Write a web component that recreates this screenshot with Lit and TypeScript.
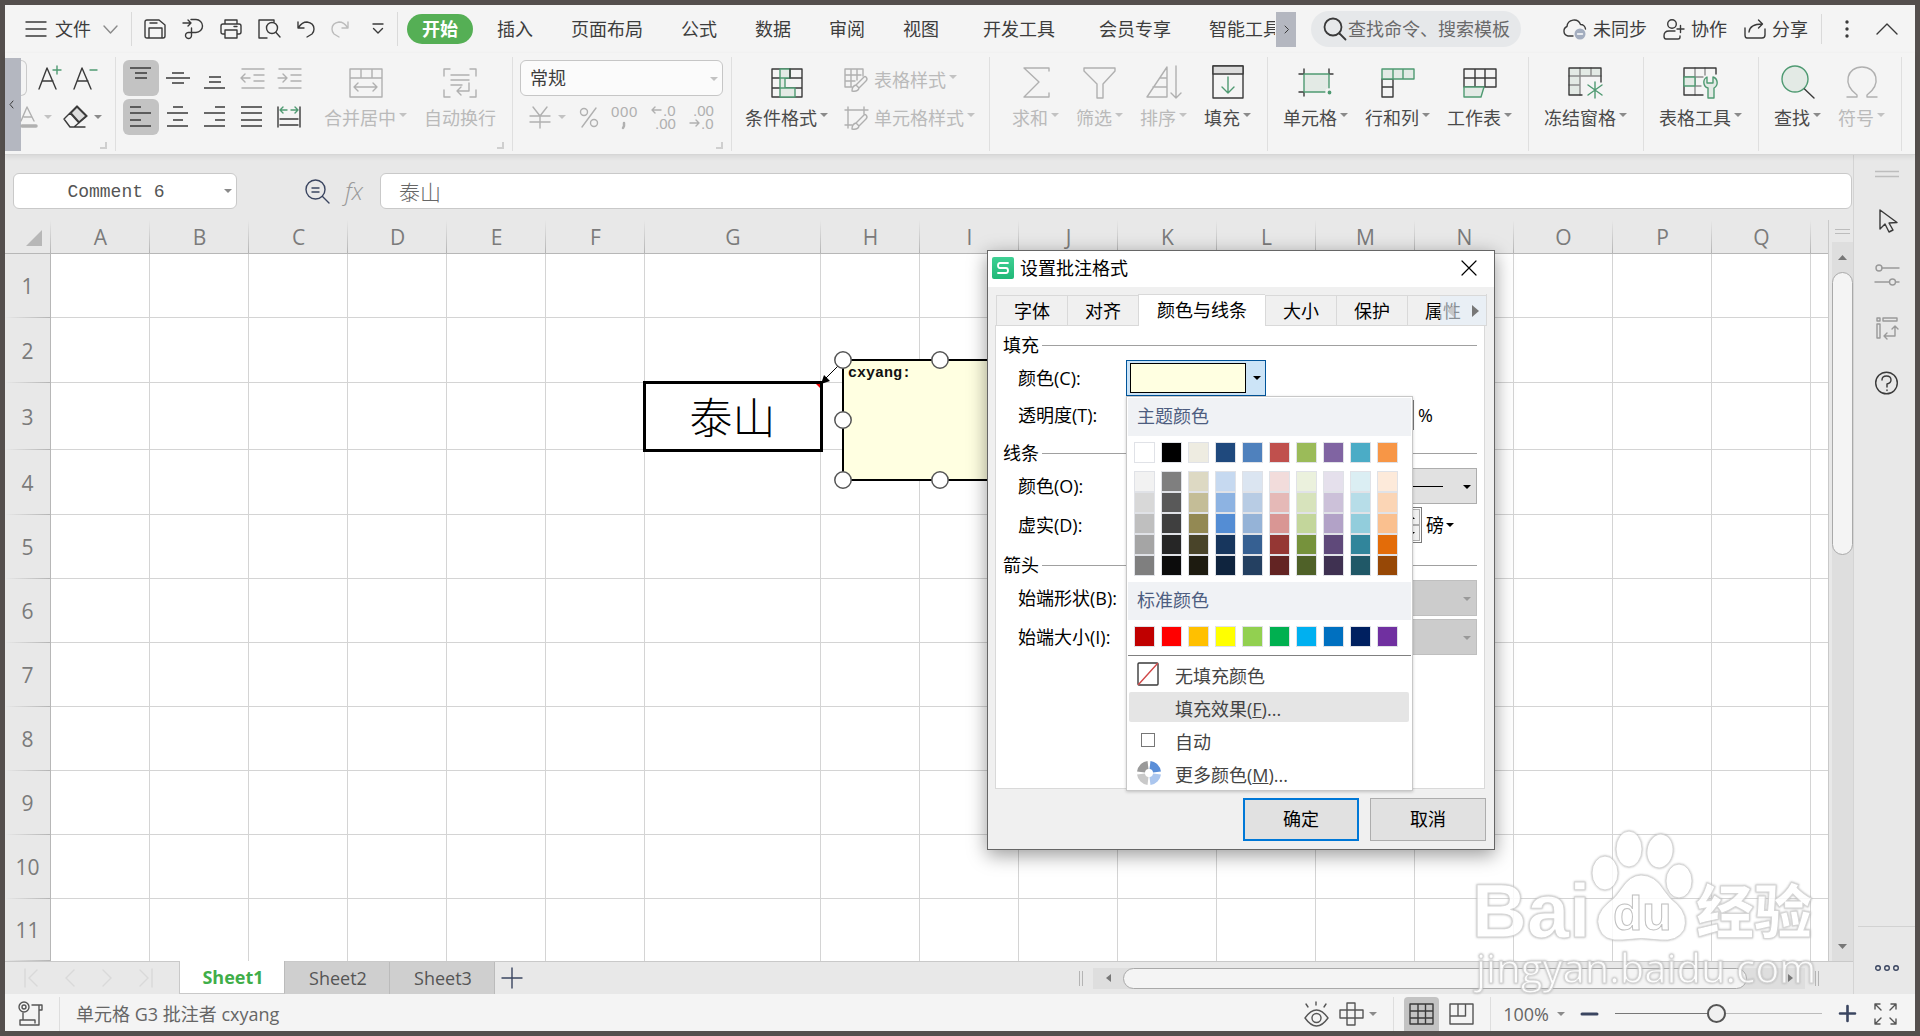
import { LitElement, html, css, svg, nothing, TemplateResult, SVGTemplateResult } from "lit";
import { customElement } from "lit/decorators.js";
import { classMap } from "lit/directives/class-map.js";
import { styleMap } from "lit/directives/style-map.js";

const DARK = "#3a3a3a";
const GREY = "#b0b0b0";
const GREEN = "#4f9a72";
const TINT = "#e3eae5";

const icon = (w: number, h: number, body: SVGTemplateResult, color = DARK): TemplateResult => html`
  <svg width=${w} height=${h} viewBox="0 0 ${w} ${h}" fill="none" stroke=${color} stroke-width="1.4"
    stroke-linecap="round" stroke-linejoin="round" aria-hidden="true">${body}</svg>`;

const caret = (color = "#8a8a8a"): TemplateResult => html`
  <svg class="caret" width="8" height="4" viewBox="0 0 8 4" aria-hidden="true"><path d="M0 0H8L4 4Z" fill=${color} /></svg>`;

const baseStyles = css`
  * { box-sizing: border-box; }
  button, input, select { font: inherit; color: inherit; margin: 0; padding: 0; border: 0; background: none; border-radius: 0; }
  button, select { cursor: pointer; }
  svg { display: block; flex: none; overflow: visible; }
`;

/* ---------- top menu ---------- */

const quick = {
  menu: icon(22, 16, svg`<path d="M1 1H21M1 8H21M1 15H21" />`),
  chev: icon(15, 9, svg`<path d="M1 1L7.500 8L14 1" />`, "#8a8a8a"),
  save: icon(22, 20, svg`<path d="M3 1H15L21 6V17Q21 19 19 19H3Q1 19 1 17V3Q1 1 3 1ZM5 19V9H18V19M6 4H13" />`),
  exportIcon: icon(22, 22, svg`<path d="M1 5H9M6 2L9 5L6 8M9 1.500H14A6.500 6.500 0 0 1 14 14.500H7A3 3 0 1 0 9.500 17.500V10" />`),
  print: icon(22, 20, svg`<path d="M5 5V1H17V5M5 15H3Q1 15 1 13V7Q1 5 3 5H19Q21 5 21 7V13Q21 15 19 15H17M5 11H17V19H5ZM14 7.500H17" />`),
  preview: icon(23, 20, svg`<path d="M9 19H1V1H16V3" /><circle cx="14" cy="9" r="5.500" /><path d="M18 13.500L22 18" />`),
  undo: icon(18, 18, svg`<path d="M1 2V8H7M1.500 7.500Q5 2 10 2Q17 3 17 9Q17 12 15 14L10 17" />`),
  redo: icon(18, 18, svg`<path d="M17 2V8H11M16.500 7.500Q13 2 8 2Q1 3 1 9Q1 12 3 14L8 17" />`, "#bcbcbc"),
  more: icon(12, 12, svg`<path d="M1 1H11M1.500 5.500L6 10L10.500 5.500" />`),
  find: icon(24, 24, svg`<circle cx="10" cy="10" r="8.500" stroke-width="1.800" /><path d="M16.500 16.500L22.500 22.500" stroke-width="1.800" />`),
  cloud: icon(25, 22, svg`<path d="M11 18H6A5 5 0 0 1 5 8.500A7 7 0 0 1 18.500 6.500A5 5 0 0 1 23.500 11" /><circle cx="18" cy="16" r="5.500" fill="#a3adbf" stroke="none" /><path d="M15.500 16H20.500" stroke="#fff" />`),
  user: icon(22, 21, svg`<circle cx="9" cy="5" r="4.300" /><path d="M12 12H6Q1 12 1 17Q1 20 3 20H15Q17 20 17 18V17M14 10H21M17.500 6.500V13.500" />`),
  share: icon(23, 20, svg`<path d="M2 9V16Q2 19 4 19H19Q22 19 22 16V10M6 13Q7 5 19 5M15.500 1L19.500 5L15.500 9" />`),
};

@customElement("top-menu")
class TopMenu extends LitElement {
  static styles = [baseStyles, css`
    :host { display: block; }
    .bar { display: flex; align-items: center; height: 48px; padding: 0 17px 0 20px; background: #f4f4f4; color: #3d3d3d; }
    .file { display: flex; align-items: center; gap: 8px; }
    .file .chev { margin-left: 4px; }
    .sep { width: 1px; height: 34px; background: #dadada; flex: none; }
    .quick { display: flex; align-items: center; gap: 16px; padding: 0 13px 0 12px; }
    .quick button:last-child { margin-left: 7px; }
    .tabs { display: flex; align-items: center; margin-left: 9px; overflow: hidden; width: 868px; }
    .tabs button { padding: 0 19px; height: 30px; flex: none; white-space: nowrap; }
    .tabs .on { background: #55af55; color: #fff; font-weight: 700; border-radius: 15px; padding: 0 15px; margin-right: 5px; }
    .tabs .wide { padding: 0 25px; }
    .scroll { width: 20px; height: 35px; background: #b4b7c0; display: grid; place-items: center; margin-left: 1px; flex: none; }
    .search { display: flex; align-items: center; width: 210px; height: 36px; margin-left: 15px; border-radius: 18px; background: #e6e8ea; padding-left: 12px; gap: 1px; }
    .search input { width: 100%; min-width: 0; outline: none; }
    .search input::placeholder { color: #6a6a6a; opacity: 1; }
    .right { display: flex; align-items: center; gap: 16px; margin-left: auto; }
    .right button { display: flex; align-items: center; gap: 6px; white-space: nowrap; }
    .right .sep { height: 30px; margin-left: -3px; }
    .right .dots { margin: 0 11px 0 7px; }
  `];

  render() {
    const tabs = ["插入", "页面布局", "公式", "数据", "审阅", "视图", "开发工具", "会员专享", "智能工具箱"];
    return html`
      <nav class="bar">
        <button class="file">${quick.menu}<span>文件</span><span class="chev">${quick.chev}</span></button>
        <span class="sep" style=${styleMap({ marginLeft: "13px" })}></span>
        <div class="quick">
          ${[quick.save, quick.exportIcon, quick.print, quick.preview, quick.undo, quick.redo, quick.more].map((i) => html`<button>${i}</button>`)}
        </div>
        <span class="sep"></span>
        <div class="tabs">
          <button class="on">开始</button>
          ${tabs.map((t) => html`<button class=${classMap({ wide: t === "开发工具" })}>${t}</button>`)}
        </div>
        <button class="scroll" aria-label="›">${icon(5, 9, svg`<path d="M1 1L4.500 4.500L1 8" stroke-width="1" />`)}</button>
        <label class="search">${quick.find}<input type="text" placeholder="查找命令、搜索模板" /></label>
        <div class="right">
          <button>${quick.cloud}未同步</button>
          <button>${quick.user}协作</button>
          <button>${quick.share}分享</button>
          <span class="sep"></span>
          <button class="dots">${icon(4, 20, svg`<g fill=${DARK} stroke="none"><circle cx="2" cy="3" r="1.700" /><circle cx="2" cy="10" r="1.700" /><circle cx="2" cy="17" r="1.700" /></g>`)}</button>
          <button>${icon(22, 12, svg`<path d="M1 11L11 1L21 11" />`)}</button>
        </div>
      </nav>`;
  }
}

/* ---------- ribbon ---------- */

const lines = (d: string, color = DARK) => icon(24, 24, svg`<path d=${d} stroke-width="1.600" stroke-linecap="butt" />`, color);

const alignIcons: { i: TemplateResult; on?: boolean }[] = [
  { i: lines("M1 2H22M6 7H18M6 12H18"), on: true },
  { i: lines("M6 7H18M0 12H24M6 17H18") },
  { i: lines("M6 11H18M6 16H18M1 22H22") },
  { i: icon(24, 24, svg`<path d="M2 3H24M14 9H24M14 15H24M2 22H24M1 12H10M5 8L1 12L5 16" />`, GREY) },
  { i: icon(24, 24, svg`<path d="M2 3H24M14 9H24M14 15H24M2 22H24M1 12H10M6 8L10 12L6 16" />`, GREY) },
  { i: lines("M1 2H12M1 8H22M1 15H12M1 21H22"), on: true },
  { i: lines("M7 2H17M1 8H22M7 15H17M1 21H22") },
  { i: lines("M12 2H22M1 8H22M12 15H22M1 21H22") },
  { i: lines("M1 2H22M1 8H22M1 15H22M1 21H22") },
  { i: icon(24, 24, svg`<path d="M1 2V22M23 2V22M3 14H21M3 20H21" /><path d="M3 5H10M6 2L3 5L6 8M21 5H14M18 2L21 5L18 8" stroke=${GREEN} />`) },
];

const big = {
  merge: icon(34, 34, svg`<path d="M1 4H33V32H1ZM1 13H33M12 4V13M23 4V13M5 22H28M9 18L5 22L9 26M24 18L28 22L24 26" />`, GREY),
  wrap: icon(34, 34, svg`<path d="M1 11V4H7M27 4H33V11M1 25V32H7M27 32H33V25M8 10H26M8 15H26M8 20H19M26 18V26H14M18 22L14 26L18 30" />`, GREY),
  cond: icon(34, 34, svg`<path d="M2 4H32V32H2ZM2 13H32M2 23H32" /><path d="M10 4H20V13H10ZM10 13H15V23H10ZM10 23H25V32H10Z" fill=${TINT} stroke=${GREEN} /><path d="M20 4V13" />`),
  sum: icon(34, 34, svg`<path d="M30 6V3H5L20 17L5 32H30V28" />`, GREY),
  filter: icon(34, 34, svg`<path d="M1 3H32V6L20 19V33H14V19L1 6Z" />`, GREY),
  sort: icon(36, 34, svg`<path d="M21 2V32H1ZM14 13H21M7 22H21M30 1V33M25 28L30 33L35 28" />`, GREY),
  fill: icon(34, 34, svg`<path d="M2 1H32V33H2Z" /><path d="M2 1H32V9H2Z" fill="#dcdcdc" /><path d="M17 12V28M11 22L17 28L23 22" stroke=${GREEN} />`),
  cell: icon(36, 34, svg`<path d="M1 9H6V4M31 4V9H35M1 27H6V31" /><path d="M6 9H31V27H6Z" fill=${TINT} stroke=${GREEN} /><circle cx="31" cy="27" r="3" fill="#f4f4f4" stroke="#f4f4f4" /><circle cx="31.500" cy="27.500" r="1.200" fill=${GREEN} stroke=${GREEN} />`),
  rowcol: icon(34, 34, svg`<path d="M1 14H12V32H1ZM1 22H12" /><path d="M1 4H33V14H1ZM12 4V14M22 4V14" fill=${TINT} stroke=${GREEN} />`),
  sheet: icon(34, 34, svg`<path d="M1 4H33V22H1ZM12 4V22M22 4V22M1 13H33" /><path d="M1 22H21L18 32H1Z" fill=${TINT} stroke=${GREEN} />`),
  freeze: icon(36, 34, svg`<path d="M1 3H33V11H12V30H1Z" fill=${TINT} stroke="none" /><path d="M12 30V11H33M12 3V11M23 3V11M1 11H12M1 20H12" stroke="#8c8c8c" /><path d="M33 17V3H1V30H14" /><path d="M27 17V33M20 20L34 30M34 20L20 30" stroke=${GREEN} />`),
  tools: icon(36, 34, svg`<path d="M12 3V30M22 3V10M1 12H20M12 21H18" stroke="#8c8c8c" /><path d="M33 9V3H1V30H20" /><path d="M1 12H12V21H1Z" fill=${TINT} stroke=${GREEN} /><path d="M25 33V23A6 6 0 0 1 24 12V18H30V12A6 6 0 0 1 31 23V33Z" fill=${TINT} stroke=${GREEN} />`),
  search: icon(34, 34, svg`<circle cx="14" cy="14" r="13" fill=${TINT} stroke=${GREEN} /><path d="M23.500 24L33 33" />`),
  omega: icon(34, 34, svg`<path d="M2 32H12V30C-3 19 2 2 17 2S37 19 22 30V32H32" />`, GREY),
};

const tableStyle = icon(24, 24, svg`<path d="M1 1H19V8M1 1V19H8M7 1V19M13 1V12M1 7H17M1 13H11" /><path d="M22 9Q24 11 22 13L15 20L12 17L20 9Q21 8 22 9ZM12 17Q8 18 8 23Q14 24 15 20" />`, GREY);
const cellStyle = icon(24, 24, svg`<path d="M4 1V22M1 4H24M20 1V8M1 19H8" /><path d="M22 9Q24 11 22 13L15 20L12 17L20 9Q21 8 22 9ZM12 17Q8 18 8 23Q14 24 15 20" />`, GREY);

@customElement("ribbon-bar")
class RibbonBar extends LitElement {
  static styles = [baseStyles, css`
    :host { display: block; }
    .ribbon { display: flex; height: 102px; padding: 4px 0 3px; background: #f4f4f4; color: #4a4a4a; border-bottom: 1px solid #d6d6d6; box-shadow: 0 2px 5px rgba(0, 0, 0, 0.08); position: relative; overflow: hidden; }
    .back { width: 16px; background: #b4b7c0; display: grid; place-items: center start; padding-left: 4px; margin-top: 1px; flex: none; }
    .group { display: flex; flex-direction: column; border-right: 1px solid #dfdfdf; padding: 3px 8px 0 7px; flex: none; }
    .content { display: flex; height: 75px; }
    .corner { align-self: flex-end; margin-top: 7px; width: 7px; height: 7px; border: solid #cfcfcf; border-width: 0 2px 2px 0; }
    .stack { display: flex; flex-direction: column; gap: 3px; }
    .line { display: flex; align-items: center; height: 36px; }
    .font { padding: 3px 8px 0 0; }
    .font .content { padding-right: 5px; }
    .edge { width: 6px; height: 36px; border: 1px solid #cacaca; border-left: 0; border-radius: 0 8px 8px 0; }
    .aligns { display: grid; grid-template-columns: repeat(5, 36px); gap: 3px 1px; }
    .aligns button { height: 36px; display: grid; place-items: center; border-radius: 6px; }
    .aligns .on { background: #c3c3c3; }
    .bigs { display: flex; gap: 17px; padding: 5px 8px 0; }
    .first { padding-left: 6px; }
    .sum { padding-left: 15px; }
    .big { display: flex; flex-direction: column; align-items: center; gap: 7px; height: 68px; }
    .label { display: flex; align-items: center; gap: 3px; line-height: 24px; white-space: nowrap; }
    .label .caret { margin-top: -6px; }
    .off { color: #bababa; }
    .fmt { position: relative; width: 203px; }
    .fmt select { appearance: none; width: 100%; height: 36px; border: 1px solid #c6c6c6; border-radius: 6px; background: #fbfbfb; padding: 0 9px; color: #3d3d3d; }
    .fmt .caret { position: absolute; right: 5px; top: 17px; pointer-events: none; }
    .nums { justify-content: space-between; padding: 0 9px 0 10px; }
    .nums button { display: flex; align-items: center; gap: 8px; }
    .nums text { font-family: "Liberation Sans", sans-serif; font-size: 15px; }
    .styles { padding: 2px 6px 0 8px; }
    .styles button { display: flex; align-items: center; gap: 6px; }
  `];

  private big(i: TemplateResult, label: string, off = false, arrow = true) {
    return html`<button class="big ${off ? "off" : ""}">${i}<span class="label">${label}${arrow ? caret(off ? "#c2c2c2" : "#8a8a8a") : nothing}</span></button>`;
  }

  render() {
    const num = (s: SVGTemplateResult, w = 25) => html`<button>${icon(w, 26, s, GREY)}</button>`;
    return html`
      <div class="ribbon">
        <button class="back">${icon(5, 9, svg`<path d="M4 1L1 4.500L4 8" stroke-width="1" />`)}</button>
        <div class="group font">
          <div class="content stack">
            <div class="line">
              <span class="edge"></span>
              <button style=${styleMap({ marginLeft: "11px" })}>${icon(25, 24, svg`<path d="M1 23L9 2L18 23M4 15H15" /><path d="M15 4H23M19 0V8" stroke=${GREEN} />`)}</button>
              <button style=${styleMap({ marginLeft: "10px" })}>${icon(26, 24, svg`<path d="M1 23L9 2L18 23M4 15H15" /><path d="M17 4H24" stroke=${GREEN} />`)}</button>
            </div>
            <div class="line">
              <button>${icon(17, 24, svg`<path d="M0 16L6 2L13 16M3 12H11" /><path d="M1 21H15" stroke-width="3.500" />`, GREY)}</button>
              <span style=${styleMap({ margin: "0 11px 0 6px" })}>${caret("#c2c2c2")}</span>
              <button>${icon(26, 24, svg`<path d="M1 14L14 1L24 11L11 22H7ZM7 8L16 18M11 22H22" /><path d="M8 8L14 2L23 11L16 17Z" fill="#dcdcdc" />`)}</button>
              <span style=${styleMap({ marginLeft: "5px" })}>${caret()}</span>
            </div>
          </div>
          <span class="corner"></span>
        </div>
        <div class="group">
          <div class="content">
            <div class="aligns">${alignIcons.map((a) => html`<button class=${classMap({ on: !!a.on })}>${a.i}</button>`)}</div>
            <div class="bigs" style=${styleMap({ paddingLeft: "17px" })}>
              ${this.big(big.merge, "合并居中", true)}${this.big(big.wrap, "自动换行", true, false)}
            </div>
          </div>
          <span class="corner"></span>
        </div>
        <div class="group">
          <div class="content stack">
            <div class="fmt"><select aria-label="常规"><option>常规</option></select>${caret("#c2c2c2")}</div>
            <div class="line nums">
              <button>${icon(20, 24, svg`<path d="M3 2L10 11L17 2M10 11V23M0 11H20M0 17H20" />`, GREY)}${caret("#c2c2c2")}</button>
              ${num(svg`<circle cx="4" cy="8" r="3.500" /><circle cx="14" cy="19" r="3.500" /><path d="M16 4L2 23" />`, 18)}
              ${num(svg`<g fill=${GREY} stroke="none"><text x="0" y="13">0</text><text x="9" y="13">0</text><text x="18" y="13">0</text></g><path d="M13 19V22L12 24" stroke-width="2.500" />`, 26)}
              ${num(svg`<path d="M1 6H10M4 3L1 6L4 9" /><g fill=${GREY} stroke="none"><text x="12" y="12">.0</text><text x="4" y="25">.00</text></g>`)}
              ${num(svg`<path d="M1 19H10M7 16L10 19L7 22" /><g fill=${GREY} stroke="none"><text x="4" y="12">.00</text><text x="12" y="25">.0</text></g>`)}
            </div>
          </div>
          <span class="corner"></span>
        </div>
        <div class="group">
          <div class="content">
            <div class="bigs first">${this.big(big.cond, "条件格式")}</div>
            <div class="styles stack">
              <button class="line off">${tableStyle}<span class="label">表格样式${caret("#c2c2c2")}</span></button>
              <button class="line off">${cellStyle}<span class="label">单元格样式${caret("#c2c2c2")}</span></button>
            </div>
          </div>
        </div>
        <div class="group">
          <div class="bigs sum">${this.big(big.sum, "求和", true)}${this.big(big.filter, "筛选", true)}${this.big(big.sort, "排序", true)}${this.big(big.fill, "填充")}</div>
        </div>
        <div class="group">
          <div class="bigs">${this.big(big.cell, "单元格")}${this.big(big.rowcol, "行和列")}${this.big(big.sheet, "工作表")}</div>
        </div>
        <div class="group"><div class="bigs">${this.big(big.freeze, "冻结窗格")}</div></div>
        <div class="group"><div class="bigs">${this.big(big.tools, "表格工具")}</div></div>
        <div class="group"><div class="bigs">${this.big(big.search, "查找")}${this.big(big.omega, "符号", true)}</div></div>
      </div>`;
  }
}

/* ---------- sheet ---------- */

const COLS = "ABCDEFGHIJKLMNOPQ".split("");
const ROWS = [64, 65, 67, 65, 64, 64, 64, 64, 64, 64, 62];

@customElement("sheet-view")
class SheetView extends LitElement {
  static styles = [baseStyles, css`
    :host { display: block; flex: 1; min-width: 0; }
    .wrap { display: flex; }
    .canvas { position: relative; flex: 1; min-width: 0; overflow: hidden; border-right: 1px solid #c9c9c9; }
    table { border-collapse: separate; border-spacing: 0; table-layout: fixed; width: 100%; background: #fff; }
    th { background: #e8e8e8; color: #7b7b7b; font-size: 21px; font-weight: 400; padding: 0; }
    thead th { height: 34px; border-bottom: 1px solid #b7b7b7; background: linear-gradient(#e8e8e8, #b4b4b4) right / 1px 100% no-repeat #e8e8e8; }
    tbody th { border-right: 1px solid #b7b7b7; background: linear-gradient(90deg, #e8e8e8, #b4b4b4) bottom / 100% 1px no-repeat #e8e8e8; }
    thead th:last-child { background: #e8e8e8; }
    td { padding: 0; border: solid #d4d4d4; border-width: 0 1px 1px 0; }
    td:last-child { border-right: 0; }
    tbody tr:last-child td { border-bottom: 0; }
    .corner svg { margin: 2px 0 0 21px; }
    .c-head { width: 46px; }
    .c { width: 99px; }
    .c-wide { width: 176px; }
    td.active { font-family: "Noto Sans CJK SC", sans-serif; font-weight: 300; font-size: 43px; line-height: 60px; padding-bottom: 2px; text-align: center; color: #000; outline: 3px solid #000; outline-offset: -1px; position: relative; background: linear-gradient(225deg, #e00 3px, transparent 4px) 100% 0 / 10px 10px no-repeat; }
    .note { position: absolute; left: 837px; top: 139px; width: 196px; height: 122px; border: 2px solid #000; background: #ffffe1; padding: 3px 4px; font: 700 15px/20px "Liberation Mono", monospace; color: #111; }
    .handles { position: absolute; left: 810px; top: 126px; }
    .vbar { width: 24px; display: flex; flex-direction: column; padding-left: 3px; flex: none; }
    .vgrip { height: 22px; padding: 9px 3px 0; }
    .vgrip i { display: block; height: 5px; width: 15px; border: solid #bcbcbc; border-width: 1px 0; }
    .track { flex: 1; display: flex; flex-direction: column; align-items: center; background: #dedede; }
    .track button { height: 30px; width: 100%; display: grid; place-items: center; }
    .thumb { width: 21px; height: 283px; border-radius: 11px; background: #f4f4f4; border: 1px solid #a9a9a9; }
    .track button:last-child { margin-top: auto; }
  `];

  render() {
    return html`
      <div class="wrap">
        <div class="canvas">
          <table>
            <colgroup>
              <col class="c-head" />
              ${COLS.map((c) => html`<col class=${c === "G" ? "c-wide" : "c"} />`)}
              <col />
            </colgroup>
            <thead><tr>
              <th class="corner"><svg width="16" height="16"><path d="M16 0V16H0Z" fill="#b7b7b7" /></svg></th>
              ${COLS.map((c) => html`<th>${c}</th>`)}<th></th>
            </tr></thead>
            <tbody>
              ${ROWS.map((h, r) => html`<tr style=${styleMap({ height: `${h}px` })}>
                <th>${r + 1}</th>
                ${COLS.map((c) => (c === "G" && r === 2 ? html`<td class="active">泰山</td>` : html`<td></td>`))}<td></td>
              </tr>`)}
            </tbody>
          </table>
          <div class="note">cxyang:</div>
          <svg class="handles" width="240" height="150" viewBox="0 0 240 150">
            <path d="M23 20L10 33" stroke="#000" /><path d="M6 38L9 29L15 35Z" fill="#000" />
            <g fill="#fff" stroke="#555" stroke-width="1.500">
              ${[[28, 14], [125, 14], [28, 74], [28, 134], [125, 134]].map(([x, y]) => svg`<circle cx=${x} cy=${y} r="8.200" />`)}
            </g>
          </svg>
        </div>
        <div class="vbar">
          <div class="vgrip"><i></i></div>
          <div class="track">
            <button aria-label="▲"><svg width="9" height="5"><path d="M0 5H9L4.500 0Z" fill="#777" /></svg></button>
            <div class="thumb"></div>
            <button aria-label="▼"><svg width="9" height="5"><path d="M0 0H9L4.500 5Z" fill="#777" /></svg></button>
          </div>
        </div>
      </div>`;
  }
}

/* ---------- format dialog ---------- */

const THEME = ["#ffffff", "#000000", "#eeece1", "#1f497d", "#4f81bd", "#c0504d", "#9bbb59", "#8064a2", "#4bacc6", "#f79646"];
const SHADES = [
  ["#f2f2f2", "#7f7f7f", "#ddd9c3", "#c6d9f0", "#dbe5f1", "#f2dcdb", "#ebf1dd", "#e5e0ec", "#dbeef3", "#fdeada"],
  ["#d8d8d8", "#595959", "#c4bd97", "#8db3e2", "#b8cce4", "#e5b9b7", "#d7e3bc", "#ccc1d9", "#b7dde8", "#fbd5b5"],
  ["#bfbfbf", "#3f3f3f", "#938953", "#548dd4", "#95b3d7", "#d99694", "#c3d69b", "#b2a2c7", "#92cddc", "#fac08f"],
  ["#a5a5a5", "#262626", "#494429", "#17365d", "#366092", "#953734", "#76923c", "#5f497a", "#31859b", "#e36c09"],
  ["#7f7f7f", "#0c0c0c", "#1d1b10", "#0f243e", "#244061", "#632423", "#4f6128", "#3f3151", "#205867", "#974806"],
];
const STANDARD = ["#c00000", "#ff0000", "#ffc000", "#ffff00", "#92d050", "#00b050", "#00b0f0", "#0070c0", "#002060", "#7030a0"];

@customElement("format-dialog")
class FormatDialog extends LitElement {
  static styles = [baseStyles, css`
    :host { display: block; width: 508px; }
    .dialog { border: 1px solid #666; background: #f0f0f0; color: #000; box-shadow: 0 5px 18px rgba(0, 0, 0, 0.4); }
    header { display: flex; align-items: center; gap: 6px; height: 36px; padding: 0 17px 2px 4px; background: #fff; }
    .logo { width: 22px; height: 22px; border-radius: 2px; background: linear-gradient(#3fd094, #20b877); display: grid; place-items: center; }
    header button { margin-left: auto; }
    .tabs { display: flex; align-items: flex-end; margin: 7px 7px 0 8px; height: 32px; position: relative; z-index: 1; overflow: hidden; border-right: 1px solid #d9d9d9; }
    .tabs button { height: 31px; padding: 0 17px; border: 1px solid #d9d9d9; border-width: 1px 0 1px 1px; white-space: nowrap; flex: none; }
    .tabs .on { height: 32px; padding: 0 18px 2px; background: #fff; border-bottom: 0; }
    .tabs button:last-of-type { flex: 1; text-align: left; }
    .nav { position: absolute; right: 0; top: 2px; width: 46px; height: 29px; background: rgba(228, 238, 249, 0.6); display: flex; align-items: center; justify-content: space-between; padding: 0 7px; }
    .panel { margin: -1px 9px 0 7px; height: 464px; background: #fff; border: 1px solid #d9d9d9; padding: 7px 7px 6px; display: flex; flex-direction: column; gap: 10px; }
    fieldset { border: 0; margin: 0; padding: 0; min-width: 0; display: flex; flex-direction: column; gap: 3px; }
    .legend { display: flex; align-items: center; gap: 3px; height: 24px; }
    .legend::after { content: ""; flex: 1; height: 1px; background: #a0a0a0; }
    .row { display: flex; align-items: center; height: 36px; padding-left: 15px; }
    .row.low { height: 32px; }
    .row > label:first-child { width: 108px; flex: none; white-space: nowrap; }
    .picker { position: relative; }
    .swatch { display: flex; align-items: center; gap: 7px; width: 140px; height: 36px; padding: 0 3px; border: 1px solid #005499; background: #cce4f7; }
    .swatch b { width: 116px; height: 30px; background: #ffffe1; border: 1px solid #000; }
    .slide { width: 180px; }
    .pct { width: 108px; height: 30px; border: 1px solid #7a7a7a; margin-right: 4px; }
    .combo { flex: 1; position: relative; display: flex; align-items: center; height: 36px; }
    .combo select { appearance: none; width: 100%; height: 36px; border: 1px solid #adadad; background: #e1e1e1; }
    .combo select:disabled { background: #ccc; border-color: #bfbfbf; opacity: 1; }
    .combo .caret { position: absolute; right: 6px; top: 17px; pointer-events: none; }
    .combo .ink { position: absolute; left: 210px; right: 34px; height: 1px; background: #000; }
    .weight { display: flex; width: 296px; height: 36px; border: 1px solid #7a7a7a; background: #fff; padding: 1px; margin-right: 4px; }
    .weight input { flex: 1; min-width: 0; appearance: textfield; outline: none; }
    .spin { display: grid; width: 17px; }
    .spin button { display: grid; place-items: center; border: 1px solid #adadad; background: #f0f0f0; }
    .unit { display: flex; align-items: center; gap: 2px; }
    .popup { position: absolute; left: 0; top: 36px; width: 287px; background: #fff; border: 1px solid #c8c8c8; padding: 1px; z-index: 2; box-shadow: 0 1px 3px rgba(0, 0, 0, 0.2); }
    .head { height: 38px; line-height: 36px; background: #f0f2f5; color: #4d5d80; padding-left: 9px; }
    .colors { display: grid; grid-template-columns: repeat(10, 21px); column-gap: 6px; margin: 6px 6px 0; }
    .colors button { height: 21px; border: 1px solid #e0e2e7; }
    .colors + .colors { margin: 8px 6px 6px; }
    .std { margin-bottom: 8px; }
    .items { border-top: 1px solid #808080; padding-top: 3px; color: #444; }
    .items button { display: flex; align-items: center; height: 30px; width: 280px; margin: 0 1px 3px; padding-top: 4px; border-radius: 2px; white-space: nowrap; }
    .items button:last-child { margin-bottom: 1px; }
    .items button.hot { background: #e5e5e5; }
    .items span { width: 46px; padding-left: 8px; flex: none; }
    .items span svg { margin-top: -4px; }
    footer { display: flex; justify-content: flex-end; gap: 11px; padding: 9px 8px 8px; }
    footer button { width: 116px; height: 43px; padding-bottom: 2px; background: #e1e1e1; border: 1px solid #adadad; }
    footer button.ok { border: 2px solid #0078d7; }
  `];

  private row(colors: string[]) {
    return colors.map((c) => html`<button aria-label=${c} style=${styleMap({ background: c })}></button>`);
  }

  private popup() {
    return html`
      <div class="popup">
        <div class="head">主题颜色</div>
        <div class="colors">${this.row(THEME)}</div>
        <div class="colors">${SHADES.map((s) => this.row(s))}</div>
        <div class="head">标准颜色</div>
        <div class="colors std">${this.row(STANDARD)}</div>
        <div class="items">
          <button><span>${icon(22, 24, svg`<rect x="1" y="1" width="20" height="22" rx="1" /><path d="M1.500 22.500L20.500 1.500" stroke="#d04848" />`)}</span>无填充颜色</button>
          <button class="hot"><span></span>填充效果(<u>F</u>)...</button>
          <button><span>${icon(22, 16, svg`<rect x="4.500" y="1.500" width="13" height="13" stroke="#777" stroke-width="1" stroke-linejoin="miter" />`)}</span>自动</button>
          <button><span>${icon(24, 26, svg`<g fill="none" stroke-width="8" stroke-linecap="butt"><path d="M4 12A8 8 0 0 1 11 5" stroke="#9a9a9a" /><path d="M13 5A8 8 0 0 1 20 12" stroke="#5a8ed8" /><path d="M4 14A8 8 0 0 0 11 21" stroke="#c9c9c9" /><path d="M13 21A8 8 0 0 0 20 14" stroke="#abc6ee" /></g>`)}</span>更多颜色(<u>M</u>)...</button>
        </div>
      </div>`;
  }

  render() {
    return html`
      <section class="dialog" role="dialog" aria-label="设置批注格式">
        <header>
          <span class="logo">${icon(14, 14, svg`<path d="M12 2H4Q2 2 2 4.500Q2 7 4 7H10Q12 7 12 9.500Q12 12 10 12H2" stroke-width="1.800" />`, "#fff")}</span>
          <span>设置批注格式</span>
          <button aria-label="×">${icon(16, 16, svg`<path d="M1 1L15 15M15 1L1 15" stroke-width="1.200" />`, "#000")}</button>
        </header>
        <div class="tabs">
          ${["字体", "对齐", "颜色与线条", "大小", "保护", "属性"].map((t) => html`<button class=${classMap({ on: t === "颜色与线条" })}>${t}</button>`)}
          <div class="nav">
            <svg width="7" height="12"><path d="M7 0V12L0 6Z" fill="#c8c8c8" /></svg>
            <svg width="7" height="12"><path d="M0 0V12L7 6Z" fill="#777" /></svg>
          </div>
        </div>
        <div class="panel">
          <fieldset>
            <div class="legend">填充</div>
            <div class="row">
              <label for="fill">颜色(C):</label>
              <div class="picker">
                <button class="swatch" id="fill"><b></b>${caret("#000")}</button>
                ${this.popup()}
              </div>
            </div>
            <div class="row low">
              <label for="alpha">透明度(T):</label>
              <input class="slide" id="alpha" type="range" min="0" max="100" value="0" />
              <input class="pct" type="text" aria-label="%" />%
            </div>
          </fieldset>
          <fieldset>
            <div class="legend">线条</div>
            <div class="row">
              <label for="line">颜色(O):</label>
              <div class="combo"><select id="line"></select><i class="ink"></i>${caret("#000")}</div>
            </div>
            <div class="row">
              <label for="dash">虚实(D):</label>
              <div class="weight">
                <input id="dash" type="number" />
                <div class="spin">
                  <button aria-label="+"><svg width="6" height="3"><path d="M0 3H6L3 0Z" /></svg></button>
                  <button aria-label="-"><svg width="6" height="3"><path d="M0 0H6L3 3Z" /></svg></button>
                </div>
              </div>
              <span class="unit">磅${caret("#000")}</span>
            </div>
          </fieldset>
          <fieldset>
            <div class="legend">箭头</div>
            <div class="row"><label for="shape">始端形状(B):</label><div class="combo"><select id="shape" disabled></select>${caret("#999")}</div></div>
            <div class="row"><label for="size">始端大小(I):</label><div class="combo"><select id="size" disabled></select>${caret("#999")}</div></div>
          </fieldset>
        </div>
        <footer><button class="ok">确定</button><button>取消</button></footer>
      </section>`;
  }
}

/* ---------- page ---------- */

@customElement("app-root")
class AppRoot extends LitElement {
  static styles = [baseStyles, css`
    :host { display: block; position: relative; font: 400 18px/24px "Open Sans", "Noto Sans CJK SC", sans-serif; overflow: hidden; }
    .frame { min-height: 100vh; border: 5px solid #544f4d; background: #e8e8e8; display: flex; flex-direction: column; }
    .work { display: flex; flex: 1; }
    main { flex: 1; min-width: 0; display: flex; flex-direction: column; }
    .formula { display: flex; align-items: center; height: 65px; padding: 7px 1px 0 8px; }
    .name { display: flex; align-items: center; width: 224px; height: 36px; background: #fff; border: 1px solid #c9c9c9; border-radius: 6px; padding-right: 4px; font: 18px/24px "Liberation Mono", monospace; color: #555; }
    .name input { flex: 1; min-width: 0; padding: 2px 6px 0 0; text-align: center; outline: none; }
    .fx { display: flex; align-items: center; gap: 15px; width: 143px; padding-left: 68px; font-size: 24px; font-weight: 300; font-style: italic; color: #999; }
    .expr { flex: 1; min-width: 0; height: 36px; background: #fff; border: 1px solid #c9c9c9; border-radius: 6px; padding: 0 18px; font-size: 21px; font-weight: 300; color: #666; outline: none; }
    .strip { display: flex; height: 33px; border-top: 1px solid #c9c9c9; }
    .navs { display: flex; align-items: center; justify-content: space-between; width: 175px; padding: 0 26px 0 19px; border-right: 1px solid #c9c9c9; }
    .sheet { width: 105px; padding-left: 2px; background: #cfcfcf; color: #555; border-right: 1px solid #bbb; }
    .sheet.on { background: #fff; color: #3fae49; font-weight: 700; margin-top: -1px; border-bottom: 1px solid #c9c9c9; }
    .add { width: 34px; display: grid; place-items: center; }
    .hbar { display: flex; align-items: center; margin-left: auto; padding-right: 34px; gap: 10px; }
    .htrack { display: flex; align-items: center; width: 712px; height: 21px; background: #dedede; }
    .htrack button { width: 30px; height: 21px; display: grid; place-items: center; }
    .hthumb { width: 624px; height: 21px; border: 1px solid #a9a9a9; border-radius: 11px; background: #f4f4f4; }
    .hgrip { width: 4px; height: 15px; border: solid #b4b4b4; border-width: 0 1px; }
    aside { width: 62px; border-left: 1px solid #d4d4d4; padding-top: 15px; display: flex; flex-direction: column; align-items: stretch; flex: none; }
    aside button { display: flex; padding-left: 21px; margin-bottom: 30px; }
    aside .grip { margin-bottom: 31px; }
    aside .rest { margin: auto 0 0 4px; height: 68px; padding: 14px 0 0 17px; border-top: 1px solid #d2d2d2; align-items: center; }
    .status { display: flex; align-items: center; height: 37px; background: #f4f4f4; color: #666; padding: 2px 18px 0 13px; }
    .sep { width: 1px; height: 34px; background: #dedede; align-self: flex-end; flex: none; }
    .msg { padding-left: 16px; }
    .right { margin-left: auto; display: flex; align-items: center; height: 35px; }
    .right button { display: flex; align-items: center; gap: 8px; }
    .right .cross { gap: 5px; margin: 0 16px 0 10px; }
    .gridmode { background: #c3c3c3; border-radius: 4px 4px 0 0; width: 35px; height: 34px; justify-content: center; align-self: flex-end; }
    .zoom { appearance: none; width: 207px; height: 20px; background: linear-gradient(90deg, #777 50%, #bbb 50%) center / 100% 1px no-repeat; }
    .zoom::-webkit-slider-thumb { appearance: none; width: 19px; height: 19px; border-radius: 50%; border: 2px solid #555; background: #f0f0f0; }
    .float { position: absolute; left: 987px; top: 250px; z-index: 3; }
    .mark { position: absolute; right: 90px; bottom: 32px; z-index: 4; pointer-events: none; filter: drop-shadow(0 0 1px #aaa); opacity: 0.85; }
    .mark .latin { font: 700 76px "Liberation Sans", sans-serif; }
    .mark .han { font: 900 58px "Noto Sans CJK SC", sans-serif; }
    .mark .du { font: 700 48px "Liberation Sans", sans-serif; }
    .mark .url { font: 400 40px "Open Sans", sans-serif; }
  `];

  render() {
    const pale = "#d9d9d9";
    const navy = "#3a4560";
    return html`
      <div class="frame">
        <top-menu></top-menu>
        <ribbon-bar></ribbon-bar>
        <div class="work">
          <main>
            <div class="formula">
              <label class="name"><input type="text" value="Comment 6" />${caret()}</label>
              <div class="fx">${icon(25, 25, svg`<circle cx="10.500" cy="10.500" r="9.500" /><path d="M17.500 17.500L24 24M7 9H14M7 13H14" />`, navy)}<span>fx</span></div>
              <input class="expr" type="text" aria-label="fx" value="泰山" />
            </div>
            <sheet-view></sheet-view>
            <div class="strip">
              <div class="navs">
                <button>${icon(14, 18, svg`<path d="M1 0V18M13 1L5 9L13 17" />`, pale)}</button>
                <button>${icon(10, 18, svg`<path d="M9 1L1 9L9 17" />`, pale)}</button>
                <button>${icon(10, 18, svg`<path d="M1 1L9 9L1 17" />`, pale)}</button>
                <button>${icon(14, 18, svg`<path d="M13 0V18M1 1L9 9L1 17" />`, pale)}</button>
              </div>
              <button class="sheet on">Sheet1</button><button class="sheet">Sheet2</button><button class="sheet">Sheet3</button>
              <button class="add" aria-label="+">${icon(20, 20, svg`<path d="M0 10H20M10 0V20" />`, navy)}</button>
              <div class="hbar">
                <span class="hgrip"></span>
                <div class="htrack">
                  <button aria-label="◀"><svg width="5" height="8"><path d="M5 0V8L0 4Z" fill="#777" /></svg></button>
                  <div class="hthumb"></div>
                  <button aria-label="▶" style=${styleMap({ marginLeft: "auto" })}><svg width="5" height="8"><path d="M0 0V8L5 4Z" fill="#777" /></svg></button>
                </div>
                <span class="hgrip"></span>
              </div>
            </div>
          </main>
          <aside>
            <button class="grip">${icon(24, 8, svg`<path d="M0 1.500H24M0 6.500H24" stroke-linecap="butt" />`, "#bdbdbd")}</button>
            <button>${icon(24, 24, svg`<path d="M5 1V20L10 15L14 23L18 21L14 14L22 13.500Z" />`)}</button>
            <button>${icon(24, 24, svg`<circle cx="4" cy="5" r="3" /><path d="M7 5H24M0 19H14M21 19H24" /><circle cx="17.500" cy="19" r="3" />`, "#999")}</button>
            <button>${icon(24, 24, svg`<rect x="2" y="1" width="3" height="3" /><rect x="8" y="1" width="14" height="3" /><rect x="2" y="7" width="3" height="14" /><path d="M20 9V19H9M17 12L20 9L23 12M12 16L9 19L12 22" />`, "#999")}</button>
            <button>${icon(24, 24, svg`<circle cx="11.500" cy="12" r="10.800" /><path d="M7 9Q7 5 11.500 5T16 9Q16 12 12 13V16M12 19V19.500" />`)}</button>
            <button class="rest">${icon(24, 8, svg`<circle cx="3" cy="4" r="2.300" /><circle cx="12" cy="4" r="2.300" /><circle cx="21" cy="4" r="2.300" />`, navy)}</button>
          </aside>
        </div>
        <div class="status">
          ${icon(25, 25, svg`<circle cx="6" cy="6" r="5" /><circle cx="6" cy="6" r="2" /><path d="M14 4H24V9H21M21 5V24H2V19H17V22M5 12V19" />`, "#555")}
          <span class="sep" style=${styleMap({ marginLeft: "16px" })}></span>
          <span class="msg">单元格 G3 批注者 cxyang</span>
          <div class="right">
            <button>${icon(25, 26, svg`<path d="M1 17Q12.500 1 24 17Q12.500 33 1 17Z" /><circle cx="12.500" cy="17" r="4.500" /><path d="M12 1V4M2 3L4 6M22 3L20 6" />`, "#555")}</button>
            <button class="cross">${icon(25, 24, svg`<path d="M8 1H16V23H8ZM1 8H24V16H1Z" />`, "#555")}${caret()}</button>
            <span class="sep"></span>
            <button class="gridmode" style=${styleMap({ marginLeft: "10px" })}>${icon(25, 22, svg`<path d="M1 1H24V21H1ZM1 8H24M1 15H24M9 1V21M16.500 1V21" />`)}</button>
            <button style=${styleMap({ margin: "0 16px 0 10px" })}>${icon(25, 22, svg`<path d="M1 1H24V21H1ZM9 1V13H1M16.500 1V13H9" />`, "#555")}</button>
            <span class="sep"></span>
            <button style=${styleMap({ marginLeft: "12px" })}>100%${caret()}</button>
            <button style=${styleMap({ margin: "0 17px 0 16px" })} aria-label="-">${icon(17, 4, svg`<path d="M1 2H16" stroke-width="3" />`, navy)}</button>
            <input class="zoom" type="range" aria-label="100%" min="0" max="100" value="49" />
            <button style=${styleMap({ margin: "0 18px 0 17px" })} aria-label="+">${icon(17, 17, svg`<path d="M1 8.500H16M8.500 1V16" stroke-width="2.600" />`, navy)}</button>
            <button>${icon(23, 22, svg`<path d="M1 6V1H6M1 1L7 7M17 1H22V6M22 1L16 7M1 16V21H6M1 21L7 15M17 21H22V16M22 21L16 15" />`, "#555")}</button>
          </div>
        </div>
      </div>
      <format-dialog class="float"></format-dialog>
      <svg class="mark" width="360" height="180" viewBox="0 0 360 180" fill="#fff" stroke="#cfcfcf" stroke-width="1">
        <ellipse cx="135" cy="49" rx="13" ry="17" /><ellipse cx="159" cy="25" rx="13" ry="18" />
        <ellipse cx="190" cy="27" rx="13" ry="17" transform="rotate(8 190 27)" /><ellipse cx="209" cy="57" rx="13" ry="17" />
        <path d="M171 51Q185 51 194 66Q200 75 207 80Q219 92 214 106Q207 118 190 116Q171 113 153 116Q133 118 129 104Q124 91 138 79Q146 73 151 65Q160 51 171 51Z" />
        <text class="latin" x="2" y="113">Bai</text>
        <text class="du" x="143" y="106" stroke="#b5b5b5">du</text>
        <text class="han" x="226" y="109">经验</text>
        <text class="url" x="6" y="159">jingyan.baidu.com</text>
      </svg>`;
  }
}
